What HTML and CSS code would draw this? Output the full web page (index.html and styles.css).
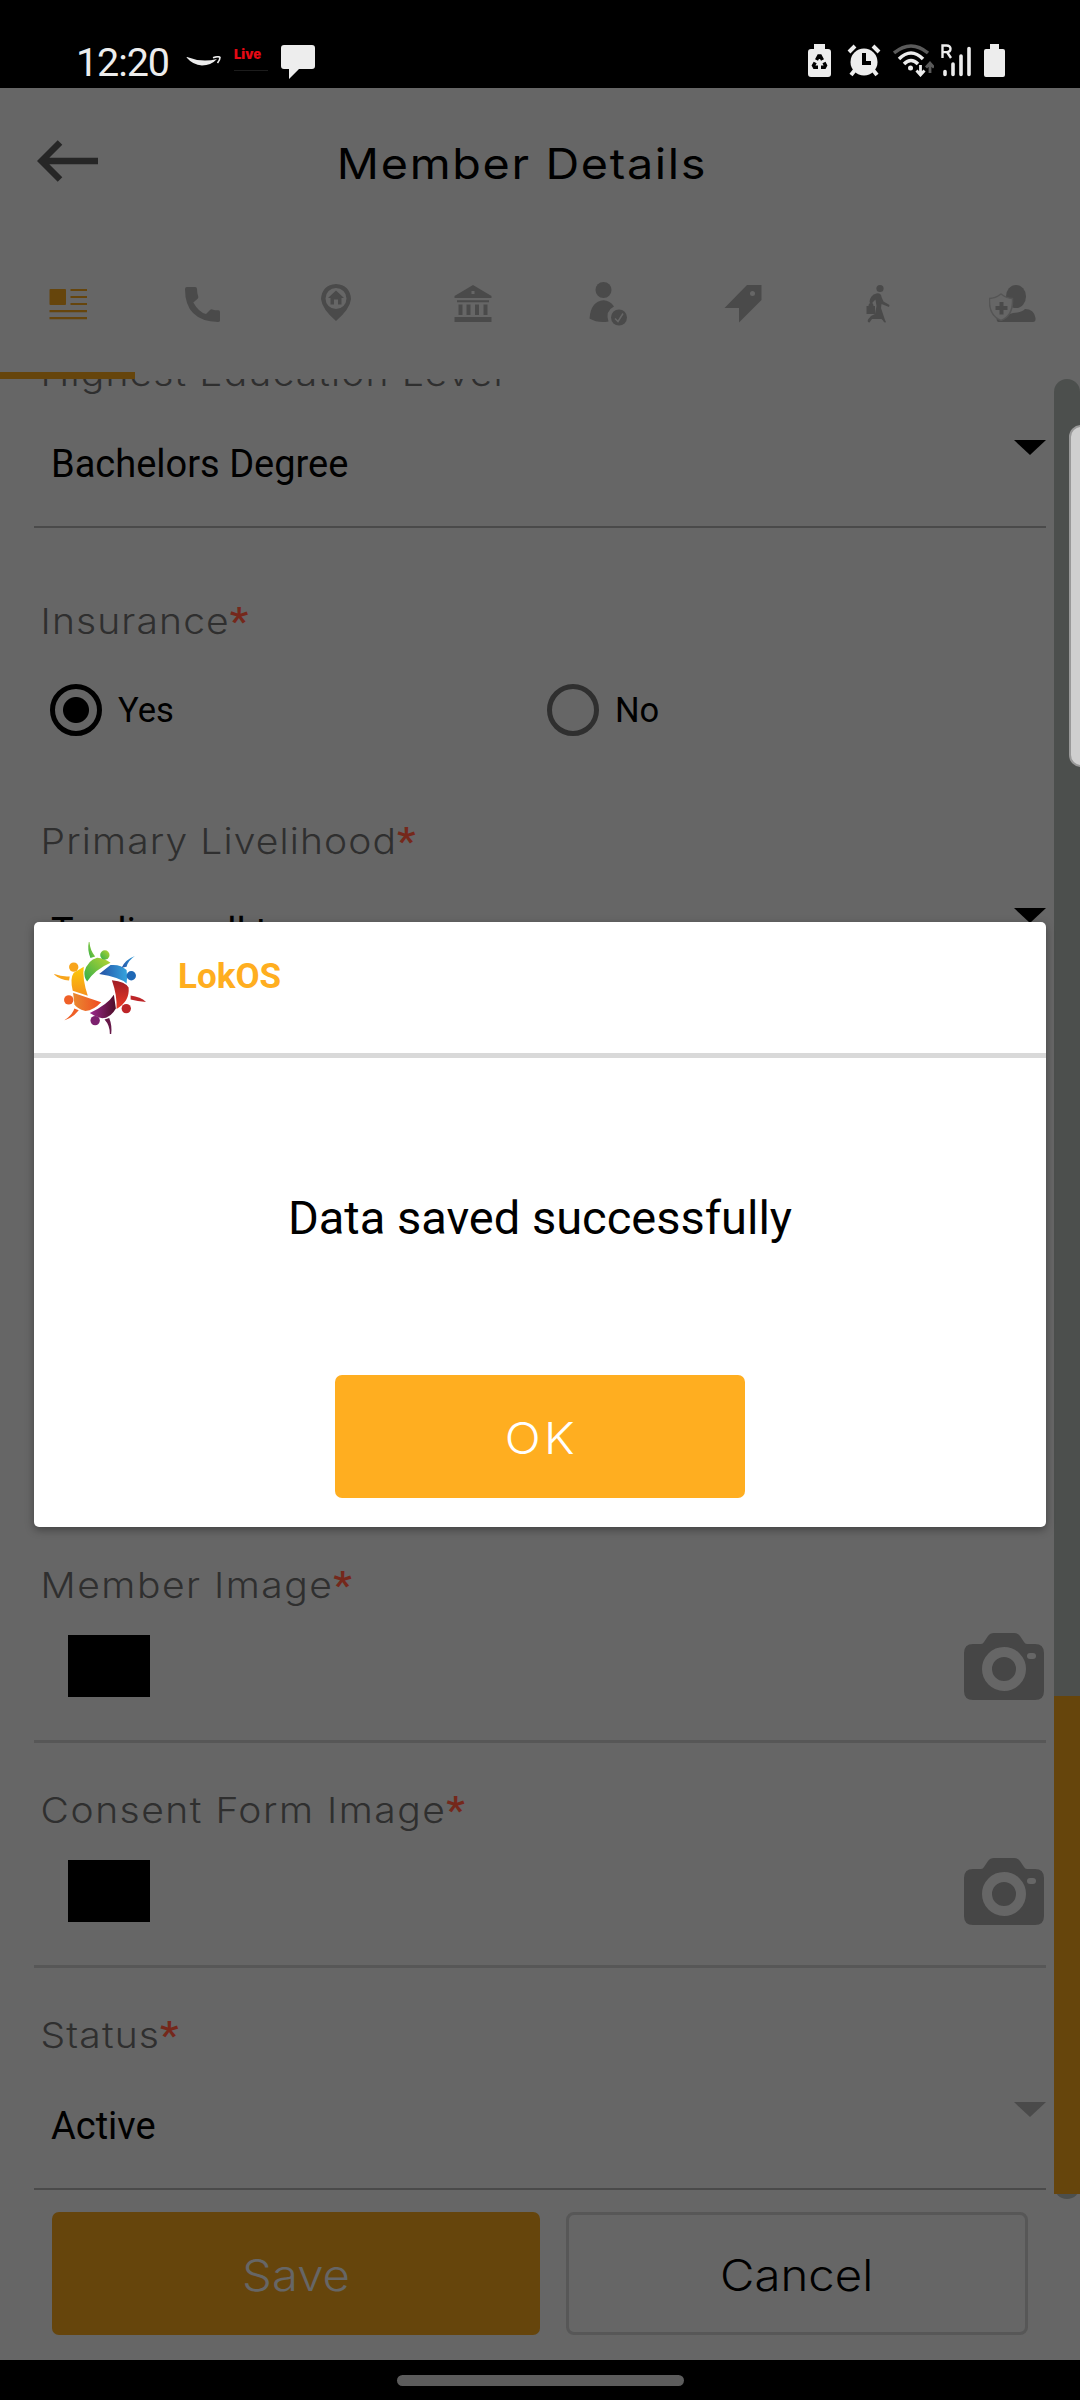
FILE: index.html
```html
<!DOCTYPE html>
<html lang="en">
<head>
<meta charset="utf-8">
<title>Member Details</title>
<link rel="stylesheet" href="styles.css">
</head>
<body>
<div class="screen">
  <div class="statusbar">
    <div class="status-left">
      <span class="clock">12:20</span>
      <svg class="ic-smile" width="36" height="12" viewBox="0 0 36 12"><path d="M1 1Q16 7 31 3Q25 9.500 16 9.500Q7 9 .5 1.500z" fill="#ededed"/><path d="M27 1.800Q33-.2 34 1.500Q34 4 31.500 7" fill="none" stroke="#ededed" stroke-width="1.600"/></svg>
      <span class="live"><b>Live</b><i></i></span>
      <svg class="ic-chat" width="34" height="34" viewBox="0 0 34 34"><path d="M3 0h28q3 0 3 3v18q0 3-3 3H18L8 34V24H3q-3 0-3-3V3q0-3 3-3z" fill="#ededed"/></svg>
    </div>
    <div class="status-right">
      <svg width="23" height="33" viewBox="0 0 23 33"><path d="M6 0h11v5h3q3 0 3 3v22q0 3-3 3H3q-3 0-3-3V8q0-3 3-3h3z" fill="#ededed"/><path d="M8.500 16l2.200-4h1.600l2.200 4M16 18.500l1.500 3-1 1.800h-3.500M10 23.300H6.500l-1-1.800 1.700-3" fill="none" stroke="#000" stroke-width="3.400"/></svg>
      <svg width="34" height="33" viewBox="0 0 34 33"><circle cx="17" cy="18" r="13.500" fill="#ededed"/><path d="M2 8l6-6M32 8l-6-6" stroke="#ededed" stroke-width="4"/><path d="M4 31l4-5M30 31l-4-5" stroke="#ededed" stroke-width="4"/><path d="M17 9v10h7" fill="none" stroke="#000" stroke-width="4"/></svg>
      <svg width="41" height="33" viewBox="0 0 41 33"><path d="M1 9Q18-5 35 9" fill="none" stroke="#5a5a5a" stroke-width="3.500"/><path d="M6 15Q18 3 30 15M11 20Q18 13 25 20" fill="none" stroke="#ededed" stroke-width="3.500"/><circle cx="17.500" cy="24" r="2.500" fill="#ededed"/><path d="M27.500 21v10M23.500 26.500l4 4.500 4-4.500" fill="none" stroke="#ededed" stroke-width="2.800"/><path d="M37 29V19M33 23.500l4-4.500 4 4.500" fill="none" stroke="#5a5a5a" stroke-width="2.800"/></svg>
      <svg width="30" height="33" viewBox="0 0 30 33"><path d="M1.500 14V1.500h4q4 0 4 3.300t-4 3.300h-4M6 8l4 6" fill="none" stroke="#ededed" stroke-width="2.400"/><path d="M4 27.500v3M12 20v10.500M20 12v18.500M28 4.500v26" stroke="#ededed" stroke-width="3.600" stroke-linecap="round"/></svg>
      <svg width="21" height="33" viewBox="0 0 21 33"><path d="M6 0h9v5h4q2 0 2 2v24q0 2-2 2H2q-2 0-2-2V7q0-2 2-2h4z" fill="#ededed"/></svg>
    </div>
  </div>

  <header class="appbar">
    <svg class="back" width="62" height="42" viewBox="0 0 62 42"><path d="M61 21H7M23 2.500L4.500 21L23 39.500" fill="none" stroke="#262626" stroke-width="6.500"/></svg>
    <h1 class="title">Member Details</h1>
  </header>

  <nav class="tabs">
    <div class="tab active"><svg width="38" height="44" viewBox="0 0 38 44" fill="#66450c"><rect x="0.500" y="7" width="16.500" height="16" rx="1"/><path d="M21.500 7H38v2H21.500zM21.500 14H38v2H21.500zM21.500 21H38v2H21.500zM.5 28H38v2.200H.5zM.5 35H38v2.200H.5z"/></svg></div>
    <div class="tab"><svg width="35" height="44" viewBox="0 0 35 44" fill="#4a4a4a"><path d="M2 5h8q2 0 2 2 0 4 1.200 7.500.4 1.200-.6 2.200L8.300 20.500Q14 30.500 21 32l4-4q1-1 2.200-.6Q30 28.300 33.500 28.300 35 28.500 35 30v8.500Q35 40 33 40 0 39 0 7 0 5 2 5z"/></svg></div>
    <div class="tab pin"><svg width="30" height="44" viewBox="0 0 30 44" fill="#4a4a4a"><path fill-rule="evenodd" d="M15 2Q29 3 30 17 29 27 15 39 1 27 0 17 1 3 15 2zM15 6A10.500 10.500 0 1 0 15 27A10.500 10.500 0 1 0 15 6z"/><path d="M15 8.500l8 7.500h-2.500v6.500H17v-5h-4v5H9.500V16H7z"/></svg></div>
    <div class="tab"><svg width="38" height="44" viewBox="0 0 38 44" fill="#4a4a4a"><path fill-rule="evenodd" d="M19 3l18.500 11v2H.5v-2zM17.500 9v3h3V9z"/><path d="M3 18.200h32v2H3zM4.500 22.500h4v10.500h-4zM12.500 22.500h4v10.500h-4zM21 22.500h4v10.500h-4zM29.500 22.500h4v10.500h-4zM.5 35h37v5H.5z"/></svg></div>
    <div class="tab"><svg width="38" height="44" viewBox="0 0 38 44" fill="#4a4a4a"><circle cx="14.500" cy="8" r="8"/><path d="M.5 36.500Q2 19 14.500 18.300 21 18.500 25 24.500 16 29 19.500 39.500 9 41.500.5 36.500z"/><circle cx="30" cy="35.500" r="8"/><path d="M26 36.500l3 3 5-8" fill="none" stroke="#666" stroke-width="1.500"/></svg></div>
    <div class="tab"><svg width="38" height="44" viewBox="0 0 38 44" fill="#4a4a4a"><path fill-rule="evenodd" d="M23 3h14.500v15L15 40.500V26H.5zM28.500 9a2.500 2.500 0 1 0 0 5 2.500 2.500 0 1 0 0-5z"/></svg></div>
    <div class="tab"><svg width="24" height="44" viewBox="0 0 24 44" fill="#4a4a4a"><circle cx="14" cy="6.500" r="3.600"/><path d="M3.500 20Q4 13 10.500 11.500q4.500-.8 5 3.500l2 4.500 6 3.500-.5 2-7.500-3-.5 4 4 12q1.500 2 .5 2.500-1.500.5-2.500-2l-1.500-1.500H6L3.500 40.500q-2.500 0-1.500-3L5 34l4-2 1.500-8-1-6.500-3 3-.5 3z"/><path d="M.5 24h2q0-3 2.500-3t2.500 3H9v8H.5z"/></svg></div>
    <div class="tab"><svg width="47" height="44" viewBox="0 0 47 44" fill="#4a4a4a"><ellipse cx="27" cy="14.500" rx="10" ry="11.500"/><path d="M24 31q8 0 12-4 9 0 10.500 9 .5 4-2.500 4H9q-2-1-1-4z"/><path d="M12 12q6 4.500 11.500 4.500 1 17-11.500 22Q-.5 33.500.5 16.500 6 16.500 12 12z" fill="#666" stroke="#555" stroke-width="1.500"/><path d="M10.500 20h4v4h4v4h-4v4.500h-4V28h-4v-4h4z"/></svg></div>
  </nav>

  <main class="scroller">
    <form class="form">
      <div class="field select">
        <label class="label">Highest Education Level</label>
        <div class="value">Bachelors Degree<svg class="caret" width="32" height="15" viewBox="0 0 32 15"><path d="M0 0h32L16 15z"/></svg></div>
      </div>
      <div class="field radios">
        <label class="label">Insurance<em>*</em></label>
        <div class="options">
          <div class="option"><i class="radio on"></i>Yes</div>
          <div class="option"><i class="radio"></i>No</div>
        </div>
      </div>
      <div class="field select livelihood">
        <label class="label">Primary Livelihood<em>*</em></label>
        <div class="value">Trading sell to<svg class="caret" width="32" height="15" viewBox="0 0 32 15"><path d="M0 0h32L16 15z"/></svg></div>
      </div>
      <div class="field photo">
        <label class="label wide">Member Image<em>*</em></label>
        <div class="shot"><div class="thumb"></div><svg width="80" height="67" viewBox="0 0 80 67"><path d="M9 11h8q2 0 3-2l4-6q2-3 6-3h20q4 0 6 3l4 6q1 2 3 2h8q9 0 9 9v38q0 9-9 9H9q-9 0-9-9V20q0-9 9-9z" fill="#464646"/><circle cx="40" cy="36" r="17" fill="none" stroke="#666" stroke-width="10"/><rect x="63" y="20" width="9" height="6" rx="3" fill="#666"/></svg></div>
      </div>
      <div class="field photo">
        <label class="label wide">Consent Form Image<em>*</em></label>
        <div class="shot"><div class="thumb"></div><svg width="80" height="67" viewBox="0 0 80 67"><path d="M9 11h8q2 0 3-2l4-6q2-3 6-3h20q4 0 6 3l4 6q1 2 3 2h8q9 0 9 9v38q0 9-9 9H9q-9 0-9-9V20q0-9 9-9z" fill="#464646"/><circle cx="40" cy="36" r="17" fill="none" stroke="#666" stroke-width="10"/><rect x="63" y="20" width="9" height="6" rx="3" fill="#666"/></svg></div>
      </div>
      <div class="field select">
        <label class="label">Status<em>*</em></label>
        <div class="value">Active<svg class="caret muted" width="32" height="15" viewBox="0 0 32 15"><path d="M0 0h32L16 15z"/></svg></div>
      </div>
    </form>
    <div class="track"><div class="thumbbar"></div></div>
  </main>

  <div class="actions">
    <button class="btn save"><span>Save</span></button>
    <button class="btn cancel"><span>Cancel</span></button>
  </div>

  <div class="navbar"><div class="pill"></div></div>

  <div class="edge-handle"></div>

  <section class="dialog">
    <div class="dialog-head">
      <svg class="logo" width="92" height="92" viewBox="161 126 275 275">
        <defs>
          <linearGradient id="g1" x1="0" x2="1" y1="1" y2="0"><stop offset="0" stop-color="#2fae4a"/><stop offset="1" stop-color="#b9d532"/></linearGradient>
          <linearGradient id="g2"><stop offset="0" stop-color="#2450a4"/><stop offset="1" stop-color="#35a4de"/></linearGradient>
          <linearGradient id="g3" x1="0" x2="0" y1="0" y2="1"><stop offset="0" stop-color="#9f1d26"/><stop offset="1" stop-color="#ee3a24"/></linearGradient>
          <linearGradient id="g4"><stop offset="0" stop-color="#9c2a8e"/><stop offset="1" stop-color="#4d0c26"/></linearGradient>
          <linearGradient id="g5"><stop offset="0" stop-color="#e98a30"/><stop offset="1" stop-color="#f04a23"/></linearGradient>
          <linearGradient id="g6" x1="0" x2="0" y1="0" y2="1"><stop offset="0" stop-color="#fccb08"/><stop offset="1" stop-color="#f6921e"/></linearGradient>
        </defs>
        <g fill="url(#g1)"><path d="M252 215Q262 180 290 173Q312 174 330 188Q285 207 260 244Q250 232 252 215z"/><circle cx="313" cy="165" r="14"/><path d="M267 126Q269 152 284 169L270 174Q260 150 265 126z"/></g>
        <g fill="url(#g2)"><path d="M296 222L330 195Q360 192 378 210Q381 230 378 250Q358 232 296 222z"/><path d="M403 168Q375 178 363 203L378 200Q382 182 403 168z"/></g><circle cx="392" cy="227" r="14" fill="#1f68b5"/>
        <g fill="url(#g3)"><path d="M334 240Q375 244 384 262Q388 303 348 326Q350 285 334 240z"/></g><g fill="#bd2528"><circle cx="377" cy="325" r="14"/><path d="M390 286Q420 290 436 305Q410 303 390 298z"/></g>
        <g fill="url(#g4)"><path d="M268 338Q320 315 340 284L346 325Q330 353 305 354Q285 350 268 338z"/></g><circle cx="284" cy="361" r="14" fill="#7c206e"/><path d="M312 358L326 353Q335 375 332 401L328 401Q328 375 312 358z" fill="#661848"/>
        <g fill="url(#g5)"><path d="M218 278L302 306Q280 330 255 332Q228 325 222 312z"/></g><g fill="#ef6027"><circle cx="205" cy="299" r="14"/><path d="M193 360Q218 352 235 330L222 325Q215 345 193 359z"/></g>
        <g fill="url(#g6)"><path d="M250 200Q245 235 262 287L217 272Q208 235 220 218z"/></g><g fill="#f8a51c"><circle cx="220" cy="201" r="14"/><path d="M162 222Q185 231 208 229L206 241Q180 240 162 224z"/></g>
      </svg>
      <h2 class="brand">LokOS</h2>
    </div>
    <p class="message">Data saved successfully</p>
    <button class="btn ok"><span>OK</span></button>
  </section>
</div>
</body>
</html>
```
FILE: styles.css
```css
* { box-sizing: border-box; }
body { margin: 0; background: #000; }
.screen { position: relative; width: 1080px; height: 2400px; overflow: hidden; display: flex; flex-direction: column; background: #666; font-family: Roboto, sans-serif; color: #000; }
svg { display: block; flex: none; }
h1, h2, p { margin: 0; font-weight: 400; }

.statusbar { height: 88px; flex: none; background: #000; color: #ededed; display: flex; justify-content: space-between; padding: 0 75px 0 76px; }
.status-left { display: flex; align-items: flex-start; }
.clock { width: 94px; font-size: 39.500px; line-height: 48px; letter-spacing: -1.100px; margin-top: 39px; white-space: nowrap; }
.ic-smile { margin: 56px 0 0 16px; }
.live { width: 34px; margin: 46px 0 0 12px; display: flex; flex-direction: column; }
.live b { font: 900 13px/17px Inter, sans-serif; color: #e50914; }
.live i { height: 1px; margin-top: 7px; background: #1c1c1c; }
.ic-chat { margin: 45px 0 0 13px; }
.status-right { display: flex; padding-top: 44px; }
.status-right svg:nth-child(2) { margin-left: 16px; }
.status-right svg:nth-child(3) { margin-left: 12px; }
.status-right svg:nth-child(4) { margin-left: 7px; }
.status-right svg:nth-child(5) { margin-left: 13px; }

.appbar { height: 150px; flex: none; display: grid; grid-template-columns: 62px 1fr 98px; padding: 0 37px; }
.back { margin-top: 52px; }
.title { font: 400 42.500px/56px Inter, sans-serif; letter-spacing: 1.500px; text-align: center; margin-top: 48px; transform: scaleX(1.1); }

.tabs { height: 141px; flex: none; display: grid; grid-template-columns: repeat(8, 1fr); }
.tab { display: flex; justify-content: center; padding-top: 44px; border-bottom: 7px solid transparent; }
.tab.pin { padding-right: 3px; }
.tab.active { border-bottom-color: #66450c; }

.scroller { height: 1820px; flex: none; overflow: hidden; display: grid; grid-template-columns: 1012px 26px; column-gap: 8px; padding-left: 34px; }
.form { margin-top: -73px; }
.field { padding-top: 44px; }
.select { height: 222px; border-bottom: 2px solid #4a4a4a; }
.radios { height: 246px; padding-top: 70px; }
.photo { height: 225px; border-bottom: 3px solid #575757; }
.livelihood { margin-bottom: 522px; }
/* Light labels are set slightly extended */
.label { display: flex; width: 860px; height: 48px; padding-left: 6px; font: 300 35.500px/48px Inter, sans-serif; letter-spacing: 1px; color: #2f2f2f; transform: scaleX(1.1); transform-origin: 0 0; }
.label.wide { letter-spacing: 1.350px; }
.label em { font: 500 38px/48px Roboto, sans-serif; letter-spacing: 0; color: #75281b; }
.value { display: flex; justify-content: space-between; height: 48px; margin-top: 42px; padding-left: 17px; font-size: 38px; line-height: 48px; }
.caret.muted { fill: #4a4a4a; }
.options { display: grid; grid-template-columns: 497px 1fr; margin-top: 38px; padding-left: 16px; font-size: 34.500px; }
.option { display: flex; align-items: center; gap: 16px; height: 52px; }
.radio { width: 52px; height: 52px; border: 5px solid #2f2f2f; border-radius: 50%; }
.radio.on { border-color: #000; background: radial-gradient(circle, #000 12.500px, transparent 13.500px); }
.shot { display: flex; justify-content: space-between; align-items: flex-start; margin-top: 23px; padding: 0 2px 0 34px; }
.thumb { width: 82px; height: 62px; margin-top: 2px; background: #000; }
.track { height: 1820px; border-radius: 13px; background: #4c4f4d; padding-top: 1317px; }
.thumbbar { height: 498px; background: #66450c; }

.actions { height: 161px; flex: none; display: grid; grid-template-columns: 488px 462px; column-gap: 26px; padding: 13px 0 0 52px; }
.btn { height: 123px; border: 0; padding: 3px 0 0; border-radius: 7px; font: 300 43px/52px Inter, sans-serif; }
.btn span { display: inline-block; transform: scaleX(1.1); }
.save { background: #66450c; color: #666; }
.cancel { background: none; border: 3px solid #575757; border-radius: 8px; color: #000; }

.navbar { height: 40px; flex: none; background: #000; display: flex; justify-content: center; padding-top: 15px; }
.pill { width: 287px; height: 11px; border-radius: 6px; background: #5c5c5c; }

.edge-handle { position: absolute; left: 1069px; top: 425px; width: 24px; height: 342px; border: 2px solid #999; border-radius: 12px; background: #cfcfcf; }

.dialog { position: absolute; left: 34px; top: 922px; width: 1012px; height: 605px; background: #fff; border-radius: 5px; box-shadow: 0 3px 8px rgba(0, 0, 0, .35); display: flex; flex-direction: column; align-items: center; }
.dialog-head { align-self: stretch; height: 136px; border-bottom: 5px solid #d9d9d9; display: flex; padding: 20px 0 0 20px; }
.brand { margin: 13px 0 0 32px; font-size: 35px; line-height: 44px; font-weight: 700; color: #ffae20; }
.message { margin-top: 130px; font-size: 47px; line-height: 60px; }
.ok { width: 410px; margin-top: 127px; background: #ffae20; color: #fff; }
.ok span { letter-spacing: 3px; padding-left: 3px; }
```
